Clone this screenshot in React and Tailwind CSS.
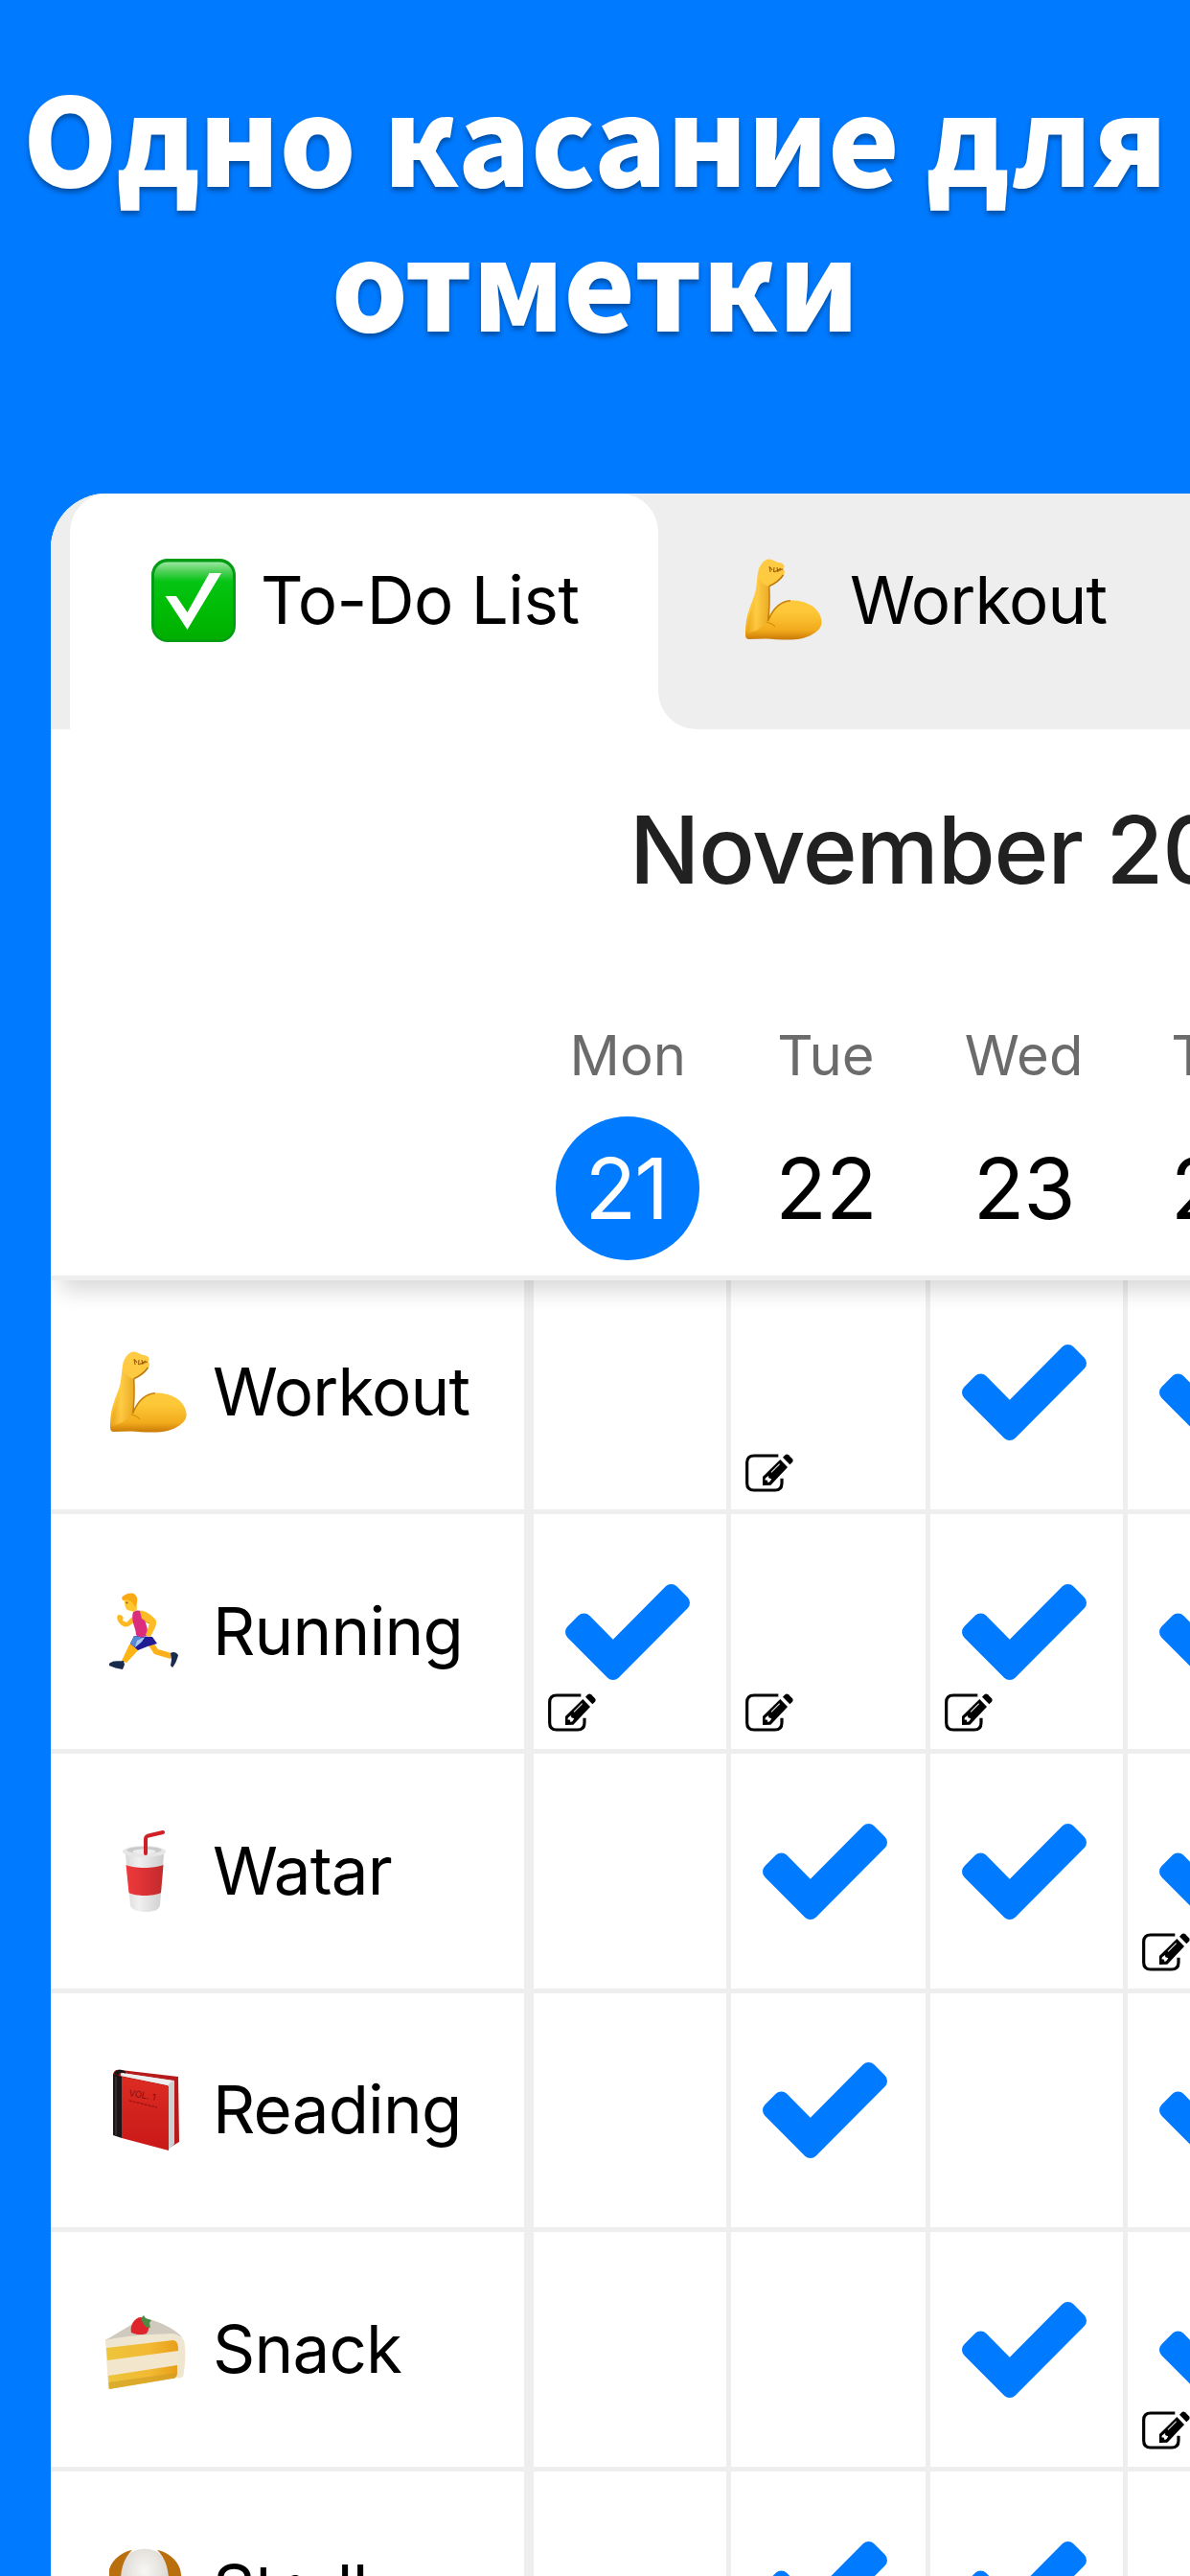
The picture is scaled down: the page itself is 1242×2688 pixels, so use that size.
import React from "react";

function CheckBoxEmoji() {
  return (
    <svg viewBox="0 0 88 87" className="block h-[87px] w-[88px] shrink-0">
      <defs>
        <linearGradient id="boxFill" x1="0" y1="0" x2="0" y2="1">
          <stop offset="0" stopColor="#9be8a0" />
          <stop offset="0.12" stopColor="#4fd058" />
          <stop offset="0.25" stopColor="#05c414" />
          <stop offset="0.55" stopColor="#00be06" />
          <stop offset="1" stopColor="#00ae00" />
        </linearGradient>
      </defs>
      <rect width="88" height="87" rx="17" fill="#049c14" />
      <rect x="3" y="3.5" width="82" height="81" rx="14" fill="url(#boxFill)" />
      <path d="M14.5 39H26l11.5 17L60.5 15H73L37.5 74Z" fill="#fff" />
    </svg>
  );
}

function MuscleEmoji() {
  return (
    <svg viewBox="0 0 80 85" className="block h-[85px] w-[80px] shrink-0">
      <defs>
        <linearGradient id="armFill" x1="0" y1="0" x2="0" y2="1">
          <stop offset="0" stopColor="#ffcb45" />
          <stop offset="0.65" stopColor="#fdc838" />
          <stop offset="0.88" stopColor="#f2ab1c" />
          <stop offset="1" stopColor="#c97806" />
        </linearGradient>
        <linearGradient id="foreFill" x1="0" y1="0" x2="1" y2="0">
          <stop offset="0" stopColor="#e9a51a" />
          <stop offset="0.4" stopColor="#ffce49" />
          <stop offset="1" stopColor="#e5a01c" />
        </linearGradient>
      </defs>
      <path d="M0 80C0 69 1 61 4 53C6 46 9 41 10.500 34C12 27 12 19 13.500 12C16 5 20 1 24 0.500C28 0 31 3 34 4C38 4 41 6 40.500 9L39.500 11C42 13 41 17 38 20C34 25 30 27 24.800 28.500C25.500 42 25 54 23.500 65C29 51 38 43.500 50 43.500C61 44 69 48 73 52C78 57 80 63 79.500 68C78 75 70 80 60 83C48 86 32 84 21 83.500L3 84C1 83.500 0 82 0 80Z" fill="url(#armFill)" />
      <path d="M2 78C2 68 4 58 8 48C12 38 12 28 14 20C17 25 20 28 24.800 28.500C25.500 44 24 58 22 66C17 73 9 76 2 78Z" fill="url(#foreFill)" opacity="0.75" />
      <path d="M24.700 29C25.500 43 25 54 23.500 65C29 51 38 44 47 43.800" fill="none" stroke="#c98009" strokeWidth="1.600" />
      <path d="M24.700 28.700C31 26 36 22 39.500 17M39 11C36 12 33 12 30 14" fill="none" stroke="#b8770f" strokeWidth="1.500" />
      <path d="M25 8L26 14M26 9L28 12M30 9L29.500 14M33 9L34 14M37 10L34 12" fill="none" stroke="#9c5d08" strokeWidth="1.100" />
      <path d="M22 66C25 67 29 68 31 71" fill="none" stroke="#dc9410" strokeWidth="1.400" />
    </svg>
  );
}

function RunnerEmoji() {
  return (
    <svg viewBox="0 0 72 80" className="block h-[80px] w-[72px] shrink-0">
      <path d="M26 50L21 54L13 71L18 73L32 58Z" fill="#fdb515" />
      <path d="M39 52L47 64L64 69L65 63L51 59L46 52Z" fill="#fdb01a" />
      <path d="M0 74C4 70 11 72 15 71L16 75L14 80C9 79 4 78 0 76Z" fill="#1a2c4c" />
      <path d="M64 63C67 61 70 62 72 65C71 70 68 76 66 78L64 76L65 70Z" fill="#1a2c4c" />
      <path d="M26 45L45 46L50 53L40 56L30 60L22 53Z" fill="#221b96" />
      <path d="M26 45L37 47L33 52L27 57L22 53Z" fill="#5788d4" />
      <path d="M29 50L37 46L34 51L27 57Z" fill="#a9c9f0" />
      <path d="M24 25L18 31L14 29C16 25 13 23 10 23C7 24 8 29 11 32C13 35 17 36 20 35L26 31Z" fill="#fdb91f" />
      <path d="M25 20C30 17 35 19 36 23L41 43C37 47 31 47 28 44C28 36 22 30 25 20Z" fill="#dc2c7c" />
      <path d="M32 19C37 18 44 23 49 29C50 34 46 40 43 46L38 44L42 32L34 27Z" fill="#fdbb25" />
      <path d="M42 32L37 30" stroke="#d98a0e" strokeWidth="1" />
      <path d="M15 6C17 10 15 14 19 18L26 20L29 17L28 4L21 1Z" fill="#ffc72f" />
      <path d="M13 5C16 1 24-1 27 2C31 6 29 12 27 15L24 10L19 7L14 8Z" fill="#f8a914" />
      <circle cx="18.500" cy="10.500" r="0.900" fill="#7a4b10" />
    </svg>
  );
}

function CupEmoji() {
  return (
    <svg viewBox="0 0 45 85" className="block h-[85px] w-[45px] shrink-0">
      <defs>
        <linearGradient id="cupFill" x1="0" y1="0" x2="1" y2="0">
          <stop offset="0" stopColor="#d9d9d9" />
          <stop offset="0.35" stopColor="#f0f0f0" />
          <stop offset="1" stopColor="#cdcdcd" />
        </linearGradient>
        <linearGradient id="sleeveFill" x1="0" y1="0" x2="1" y2="0">
          <stop offset="0" stopColor="#ee3a3c" />
          <stop offset="0.5" stopColor="#dc3234" />
          <stop offset="1" stopColor="#c02a2c" />
        </linearGradient>
      </defs>
      <path d="M3 25L8 78C9 83 16 85 24 85C32 85 38 83 39 78L43 25Z" fill="url(#cupFill)" />
      <ellipse cx="22.500" cy="22" rx="22.500" ry="6" fill="#e6e6e6" />
      <ellipse cx="22.500" cy="20.500" rx="18" ry="3.500" fill="#cacaca" />
      <ellipse cx="22.500" cy="22" rx="12" ry="2.400" fill="#ededed" />
      <path d="M3.500 36C12 40 33 40 42.500 36L40 65C33 69 13 69 6.500 65Z" fill="url(#sleeveFill)" />
      <path d="M24 24V9C24 6 26 5.500 29 5L42 2" fill="none" stroke="#d11f26" strokeWidth="4" strokeLinecap="round" />
    </svg>
  );
}

function BookEmoji() {
  return (
    <svg viewBox="0 0 69 85" className="block h-[85px] w-[69px] shrink-0">
      <defs>
        <linearGradient id="coverFill" x1="0" y1="0" x2="0" y2="1">
          <stop offset="0" stopColor="#dc2c22" />
          <stop offset="1" stopColor="#c91818" />
        </linearGradient>
      </defs>
      <path d="M0 5C1 1 4 0 8 1L68 8L69 76L59 82L0 68Z" fill="#b71a1a" />
      <path d="M8 4L64 12V78L58 84L57 17L8 7Z" fill="#cfcfcf" />
      <path d="M10 4L62 12L57 17L8 7Z" fill="#eeeeee" />
      <path d="M9 8L58 18V85L9 72Z" fill="url(#coverFill)" />
      <path d="M0 5L9 8V72L0 69Z" fill="#1c1416" />
      <path d="M1 5C3 0 8 0 13 2.500L13 4.500C8 3 6 4 6 7Z" fill="#181617" />
      <path d="M3 8V69" stroke="#4a4444" strokeWidth="1" />
      <text x="0" y="0" transform="translate(16 28) rotate(10)" fontSize="9.5" fontFamily="Inter, sans-serif" fill="#85100f">VOL. 1</text>
      <path d="M17 33L46 40" stroke="#9e1513" strokeWidth="1.500" strokeDasharray="3 1" />
    </svg>
  );
}

function CakeEmoji() {
  return (
    <svg viewBox="0 0 84 78" className="block h-[78px] w-[84px] shrink-0">
      <defs>
        <linearGradient id="spongeFill" x1="0" y1="0" x2="1" y2="0">
          <stop offset="0" stopColor="#ecc53b" />
          <stop offset="0.6" stopColor="#f3b932" />
          <stop offset="1" stopColor="#e79f1a" />
        </linearGradient>
      </defs>
      <path d="M0 25L3 77L60 68L81 64C84 50 84 34 82 26L74 19Z" fill="#f2e6cc" />
      <path d="M0 26L30 8C38 3 47 4 52 6C64 10 78 18 82 26C80 22 74 20 68 20L1 29Z" fill="#cfcabd" />
      <path d="M0 26C20 21 50 20 68 19C78 19 83 25 82 36L81 64L76 66V30C73 24 68 25 63 26L1 33Z" fill="#efe6d2" />
      <path d="M1 34L70 26C75 26 76 30 76 37L2 47Z" fill="url(#spongeFill)" />
      <path d="M3 63L75 52V60C75 64 73 66 69 66L4 77Z" fill="url(#spongeFill)" />
      <path d="M3 70L74 60C74 64 73 66 69 66L4 77Z" fill="#cf9c24" opacity="0.6" />
      <path d="M27 18C25 10 31 2 37 2C45 3 48 12 43 19C38 21 31 20 27 18Z" fill="#e0242b" />
      <path d="M37 3L40 0L42 3L48 5L46 8L47 13L42 12L39 8Z" fill="#4f8a43" />
    </svg>
  );
}

function DogEmoji() {
  return (
    <svg viewBox="0 0 84 84" className="block h-[84px] w-[84px] shrink-0">
      <defs>
        <radialGradient id="headFill" cx="0.5" cy="0.3" r="0.6">
          <stop offset="0" stopColor="#f8f7f5" />
          <stop offset="1" stopColor="#cfcac3" />
        </radialGradient>
      </defs>
      <ellipse cx="37" cy="40" rx="32" ry="39.500" fill="url(#headFill)" />
      <path d="M24 2C14 3 3 12 0 22C-4 36 2 60 10 52C13 36 9 16 24 2Z" fill="#b96f0e" />
      <path d="M50 2C60 3 71 12 74 22C78 36 72 60 64 52C61 36 65 16 50 2Z" fill="#b96f0e" />
      <circle cx="25" cy="42" r="4" fill="#222" />
      <circle cx="49" cy="42" r="4" fill="#222" />
      <ellipse cx="37" cy="56" rx="8" ry="5" fill="#222" />
    </svg>
  );
}

function Check() {
  return (
    <svg viewBox="121 334 1550 1188" preserveAspectRatio="none" className="block h-[100px] w-[130px] shrink-0">
      <path
        fill="#007aff"
        d="M1671 566q0 40-28 68l-724 724-136 136q-28 28-68 28t-68-28l-136-136-362-362q-28-28-28-68t28-68l136-136q28-28 68-28t68 28l294 295 656-657q28-28 68-28t68 28l136 136q28 28 28 68z"
      />
    </svg>
  );
}

function Note() {
  return (
    <svg viewBox="0 0 150 120" className="absolute bottom-[18px] left-[15px] h-[40px] w-[50px]">
      <path d="M103 6H27Q5 6 5 28V92Q5 114 27 114H92Q114 114 114 92V77" fill="none" stroke="#000" strokeWidth="9.500" />
      <path d="M54 72L109 18L132 42L79 98L54 99Z" fill="#000" />
      <path d="M117 11L125 3Q130 0 135 4L147 16Q151 21 147 26L139 34Z" fill="#000" />
      <path d="M81 58L107 32" stroke="#ddd" strokeWidth="3.500" />
      <path d="M63 76L72 69L73 76L82 79L76 88L70 90L69 83L61 82Z" fill="#fff" />
    </svg>
  );
}

const days = [
  ["Mon", "21"],
  ["Tue", "22"],
  ["Wed", "23"],
  ["Thu", "24"],
];

const columnWidths = ["w-[206px]", "w-[208px]", "w-[206px]", "w-[207px]"];

// Each cell: c = completed, n = has a note
const rows = [
  { name: "Workout", icon: <MuscleEmoji />, iconPad: "pl-[5px]", height: "h-[244px]", cells: ["", "n", "c", "c"] },
  { name: "Running", icon: <RunnerEmoji />, iconPad: "pl-[4px]", height: "h-[250px]", cells: ["cn", "n", "cn", "c"] },
  { name: "Watar", icon: <CupEmoji />, iconPad: "pl-[18px]", height: "h-[250px]", cells: ["", "c", "c", "cn"] },
  { name: "Reading", icon: <BookEmoji />, iconPad: "pl-[8px]", height: "h-[249px]", cells: ["", "c", "", "c"] },
  { name: "Snack", icon: <CakeEmoji />, iconPad: "pl-0 pt-[7px]", height: "h-[250px]", cells: ["", "", "c", "cn"] },
  { name: "Stroll", icon: <DogEmoji />, iconPad: "pl-[4px]", height: "h-[250px]", cells: ["", "c", "c", ""] },
];

function HabitRow({ row }) {
  return (
    <div className={`flex shrink-0 ${row.height}`}>
      <div className="flex w-[504px] shrink-0 items-end border-r-[10px] border-b-[5px] border-[#eeeeee] pb-[79px] pl-[57px]">
        <div className={`flex h-[88px] w-[112px] shrink-0 items-center ${row.iconPad}`}>{row.icon}</div>
        <div className="text-[69px] leading-[88px] tracking-[-0.8px] whitespace-nowrap">{row.name}</div>
      </div>
      {row.cells.map((cell, i) => (
        <div
          key={i}
          className={`relative flex shrink-0 items-end border-r-[5px] border-b-[5px] border-[#eeeeee] pb-[72px] pl-[33px] ${columnWidths[i]}`}
        >
          {cell.includes("c") && <Check />}
          {cell.includes("n") && <Note />}
        </div>
      ))}
    </div>
  );
}

export default function App() {
  return (
    <div className="flex h-[2688px] w-[1242px] flex-col overflow-hidden bg-[#007aff] font-['Inter','Liberation_Sans',sans-serif] text-black">
      <h1 className="h-[515px] shrink-0 pt-[65px] text-center font-['Noto_Sans_CJK_JP','Noto_Sans',sans-serif] text-[126px] leading-[151px] font-black tracking-[-0.3px] whitespace-nowrap text-white [text-shadow:0_4px_5px_rgba(0,0,0,0.35)]">
        Одно касание для
        <br />
        отметки
      </h1>

      <main className="ml-[53px] flex grow flex-col overflow-hidden rounded-tl-[58px] bg-white">
        <div className="relative z-10 -mr-[60px] flex h-[821px] shrink-0 flex-col border-b-[5px] border-[#eeeeee] bg-white shadow-[0_20px_22px_-10px_rgba(0,0,0,0.16)]">
          <nav className="flex h-[246px] shrink-0">
            <div className="w-[20px] shrink-0 bg-[#eeeeee]" />
            <div className="w-[614px] shrink-0 bg-[#eeeeee]">
              <div className="flex h-full items-start rounded-t-[40px] bg-white pt-[68px] pl-[85px]">
                <CheckBoxEmoji />
                <span className="ml-[26px] text-[69px] leading-[86px] tracking-[-0.5px] whitespace-nowrap">To-Do List</span>
              </div>
            </div>
            <div className="flex grow items-start overflow-hidden rounded-bl-[40px] bg-[#eeeeee] pt-[68px] pl-[91px]">
              <MuscleEmoji />
              <span className="ml-[29px] text-[69px] leading-[86px] tracking-[-0.8px] whitespace-nowrap">Workout</span>
            </div>
          </nav>

          <h2 className="mt-[66px] h-[120px] shrink-0 pl-[604px] text-[97px] leading-[120px] font-medium tracking-[-1.1px] whitespace-nowrap text-[#212121]">
            November 2022
          </h2>

          <div className="mt-[114px] flex pl-[499px]">
            {days.map(([name, num], i) => (
              <div key={name} className="flex w-[206.67px] shrink-0 flex-col items-center">
                <span className="h-[80px] text-[58px] leading-[80px] text-[#6b6b6b]">{name}</span>
                <span
                  className={`mt-[24px] flex h-[150px] w-[150px] items-center justify-center rounded-full text-[88px] leading-[150px] ${
                    i === 0 ? "bg-[#007aff] pr-[4px] tracking-[-2px] text-white" : "tracking-[-1px]"
                  }`}
                >
                  {num}
                </span>
              </div>
            ))}
          </div>
        </div>

        {rows.map((row) => (
          <HabitRow key={row.name} row={row} />
        ))}
      </main>
    </div>
  );
}
